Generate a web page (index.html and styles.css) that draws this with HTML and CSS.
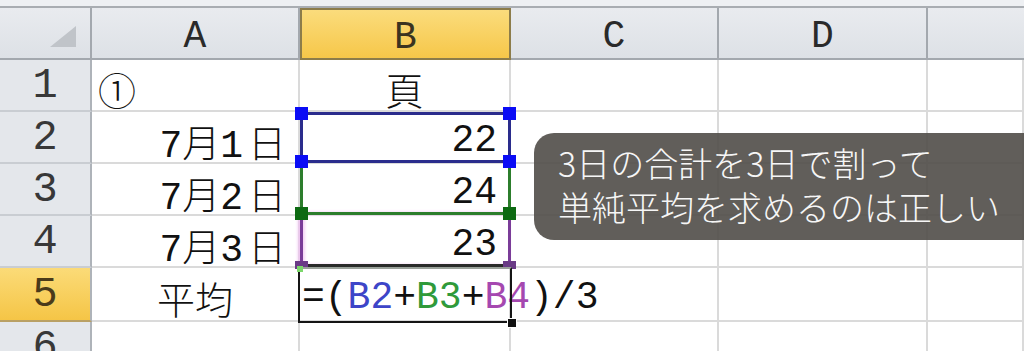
FILE: index.html
```html
<!DOCTYPE html>
<html lang="ja">
<head>
<meta charset="utf-8">
<title>平均</title>
<link rel="stylesheet" href="styles.css">
</head>
<body>
<div class="app">
  <div class="strip"></div>
  <div class="sheet">
    <div class="hd corner"><span class="tri"></span></div>
    <div class="hd col">A</div>
    <div class="hd col sel">B</div>
    <div class="hd col">C</div>
    <div class="hd col">D</div>
    <div class="hd col last"></div>

    <div class="hd row">1</div>
    <div class="c left"><span class="cjk">①</span></div>
    <div class="c center"><span class="cjk">頁</span></div>
    <div class="c"></div><div class="c"></div><div class="c"></div>

    <div class="hd row">2</div>
    <div class="c right">7月1<span class="day">日</span></div>
    <div class="c right">22</div>
    <div class="c"></div><div class="c"></div><div class="c"></div>

    <div class="hd row">3</div>
    <div class="c right">7月2<span class="day">日</span></div>
    <div class="c right">24</div>
    <div class="c"></div><div class="c"></div><div class="c"></div>

    <div class="hd row">4</div>
    <div class="c right">7月3<span class="day">日</span></div>
    <div class="c right">23</div>
    <div class="c"></div><div class="c"></div><div class="c"></div>

    <div class="hd row sel">5</div>
    <div class="c center">平均</div>
    <div class="c formula">=(<span class="r1">B2</span>+<span class="r2">B3</span>+<span class="r3">B4</span>)/3</div>
    <div class="c"></div><div class="c"></div><div class="c"></div>

    <div class="hd row">6</div>
    <div class="c"></div><div class="c"></div><div class="c"></div><div class="c"></div><div class="c"></div>

    <div class="range purple"><i class="h bl"></i><i class="h br"></i></div>
    <div class="range green"><i class="h bl"></i><i class="h br"></i></div>
    <div class="range blue"><i class="h tl"></i><i class="h tr"></i><i class="h bl"></i><i class="h br"></i></div>
    <div class="active"><i class="fill"></i><i class="dot"></i></div>
  </div>
  <div class="note">
    <p>3日の合計を3日で割って</p>
    <p>単純平均を求めるのは正しい</p>
  </div>
</div>
</body>
</html>
```

FILE: styles.css
```css
* { box-sizing: border-box; }
html, body { margin: 0; padding: 0; }
body {
  width: 1024px;
  height: 351px;
  overflow: hidden;
  background: #ffffff;
  font-family: "Liberation Mono", "Noto Sans CJK JP", monospace;
}
.app {
  position: relative;
  width: 1024px;
  height: 351px;
  overflow: hidden;
}
.strip {
  height: 8px;
  background: #eef0f3;
  border-bottom: 2px solid #a9adb2;
}
.sheet {
  position: relative;
  display: grid;
  grid-template-columns: 92px 208px 211px 208px 209px 96px;
  grid-template-rows: 52px 52px 52px 52px 52px 54px 52px;
}
.hd {
  background: linear-gradient(#e9ebef, #dde1e6);
  color: #2a2a2a;
  display: flex;
  align-items: center;
  justify-content: center;
}
.corner {
  border-right: 2px solid #a3a8ae;
  border-bottom: 2px solid #a3a8ae;
  justify-content: flex-end;
  align-items: flex-end;
  padding: 0 14px 11px 0;
}
.tri {
  width: 26px;
  height: 21px;
  background: #c0c4c9;
  clip-path: polygon(100% 0, 100% 100%, 0 100%);
}
.col {
  font-size: 38px;
  padding-top: 6px;
  border-right: 2px solid #a3a8ae;
  border-bottom: 2px solid #a3a8ae;
}
.col.last { border-right: none; }
.col.sel {
  background: linear-gradient(#fbdc7c, #f6c749);
  border: 2px solid #8c7c4a;
  color: #3b3320;
}
.row {
  font-size: 42px;
  padding-top: 2px;
  color: #383838;
  background: #e4e7eb;
  border-right: 2px solid #aeb3b9;
  border-bottom: 2px solid #c9cdd2;
}
.row.sel {
  background: linear-gradient(#fbdb78, #f5c546);
  border-bottom: 2px solid #b9a064;
  color: #4a3a1a;
}
.c {
  border-right: 2px solid #dadada;
  border-bottom: 2px solid #dadada;
  font-size: 38px;
  font-weight: 300;
  color: #111;
  display: flex;
  align-items: center;
  padding-top: 6px;
  white-space: pre;
}
.cjk { font-family: "Noto Sans CJK JP", sans-serif; font-weight: 300; }
.day { margin-left: 5px; }
.c.left { padding-left: 6px; }
.c.center { justify-content: center; }
.c.right { justify-content: flex-end; padding-right: 12px; }
.c.formula { padding-left: 2px; position: relative; z-index: 1; }
.r1 { color: #3d45c8; }
.r2 { color: #2f9a3a; }
.r3 { color: #a548b0; }

.range {
  position: absolute;
  left: 300px;
  width: 211px;
  border: 3px solid;
}
.range.blue { top: 104px; height: 51px; border-color: #2a2c8c; }
.range.green { top: 152px; height: 55px; border-color: #2c7d2c; }
.range.purple {
  top: 204px; height: 55px; border-color: #7a3c98;
  border-bottom-color: #2a2a2a;
  box-shadow: -2px 0 3px #f0c4f2, inset 2px 0 3px #f5d2f5;
}
.h {
  position: absolute;
  width: 13px;
  height: 13px;
}
.blue .h { background: #0a0cf5; }
.green .h { background: #0d6a12; }
.purple .h { background: #6a3a86; height: 8px; }
.h.tl { left: -8px; top: -8px; }
.h.tr { right: -8px; top: -8px; }
.h.bl { left: -8px; bottom: -8px; }
.h.br { right: -8px; bottom: -8px; }
.purple .h.bl, .purple .h.br { bottom: -5px; }

.active {
  position: absolute;
  left: 298px;
  top: 259px;
  width: 214px;
  height: 56px;
  border: 2px solid #151515;
  border-top-color: #9aa09a;
  z-index: 2;
}
.fill {
  position: absolute;
  right: -6px;
  bottom: -6px;
  width: 8px;
  height: 8px;
  background: #111;
  outline: 1px solid #fff;
}
.dot {
  position: absolute;
  left: -3px;
  top: -3px;
  width: 6px;
  height: 6px;
  background: #7bd86a;
}

.note {
  position: absolute;
  left: 534px;
  top: 133px;
  width: 520px;
  height: 107px;
  padding: 8px 0 0 24px;
  border-radius: 20px;
  background: rgba(84, 80, 76, 0.92);
  color: #f6f6f6;
  font-family: "Noto Sans CJK JP", sans-serif;
  font-weight: 300;
  font-size: 34px;
  line-height: 44px;
  z-index: 3;
}
.note p { margin: 0; white-space: nowrap; }
```
